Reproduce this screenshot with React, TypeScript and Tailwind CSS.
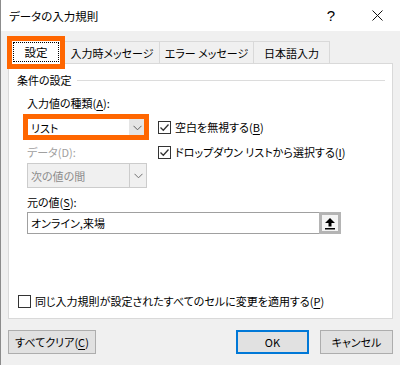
const font = "font-['Yu_Gothic_UI','Noto_Sans_CJK_JP',sans-serif] [font-feature-settings:'palt']"

function Check({ checked }: { checked: boolean }) {
  return (
    <span className="flex h-[13px] w-[13px] shrink-0 items-center justify-center border border-[#333] bg-white">
      {checked && (
        <svg width="11" height="11" viewBox="0 0 11 11">
          <path d="M1.5 5.5 L4.3 8.3 L9.5 2.5" fill="none" stroke="#333" strokeWidth="1.3" />
        </svg>
      )}
    </span>
  )
}

function Chevron({ color }: { color: string }) {
  return (
    <svg width="9" height="6" viewBox="0 0 9 6">
      <path d="M0.5 0.8 L4.5 4.8 L8.5 0.8" fill="none" stroke={color} strokeWidth="1" />
    </svg>
  )
}

function U({ c }: { c: string }) {
  return (
    <>
      (<span className="underline underline-offset-2">{c}</span>)
    </>
  )
}

export default function App() {
  return (
    <div
      className={`flex h-[365px] w-[400px] flex-col overflow-hidden border-l border-[#8c8c8c] bg-[#f0f0f0] text-[11px] leading-[16px] text-black ${font}`}
    >
      {/* タイトルバー */}
      <div className="flex h-[31px] shrink-0 items-center bg-white pl-[8px]">
        <span className="text-[11.5px]">データの入力規則</span>
        <div className="ml-auto flex h-full">
          <div className="flex w-[46px] items-center justify-center text-[15px] font-['Liberation_Sans',sans-serif]">?</div>
          <div className="flex w-[46px] items-center justify-center">
            <svg width="11" height="11" viewBox="0 0 11 11">
              <path d="M0.5 0.5 L10.5 10.5 M10.5 0.5 L0.5 10.5" stroke="#111" strokeWidth="1" />
            </svg>
          </div>
        </div>
      </div>

      <div className="flex flex-1 flex-col px-[7px]">
        {/* タブ */}
        <div className="relative z-10 mt-[7px] flex h-[25px] items-end pl-[2px]">
          <div className="relative mb-[-1px] flex h-[26px] w-[52px] items-center justify-center border border-b-0 border-[#d9d9d9] bg-white">
            <span className="flex h-[20px] w-[46px] items-center justify-center border border-dotted border-black text-[11.5px]">設定</span>
            <div className="absolute -left-[4px] -top-[3px] -right-[4px] -bottom-[5px] border-[5px] border-[#ff6600]" />
          </div>
          <div className="flex h-[22px] w-[98px] items-center justify-center border border-b-0 border-[#d9d9d9] pl-[2px]">入力時メッセージ</div>
          <div className="-ml-px flex h-[22px] w-[95px] items-center justify-center border border-b-0 border-[#d9d9d9]">エラー メッセージ</div>
          <div className="-ml-px flex h-[22px] w-[77px] items-center justify-center border border-b-0 border-[#d9d9d9]">日本語入力</div>
        </div>

        {/* パネル */}
        <div className="flex h-[256px] flex-col border border-[#d9d9d9] bg-white pl-[8px]">
          <div className="mt-[8px] flex items-center pr-[7px]">
            <span>条件の設定</span>
            <div className="ml-[5px] h-px flex-1 bg-[#dcdcdc]" />
          </div>

          <div className="flex flex-col pl-[10px]">
            <div className="mt-[7px]">
              入力値の種類<U c="A" />:
            </div>

            <div className="mt-[5px] flex items-start">
              <div className="flex w-[120px] flex-col">
                <div className="relative flex h-[24px] border border-[#7a7a7a] bg-white">
                  <span className="flex flex-1 items-center pl-[3px]">リスト</span>
                  <span className="flex w-[17px] items-center justify-center bg-[#e5e5e5]">
                    <Chevron color="#606060" />
                  </span>
                  <div className="absolute -left-[5px] -top-[3px] -right-[3px] -bottom-[1px] border-[5px] border-[#ff6600]" />
                </div>
                <div className="mt-[4px] text-[#a0a0a0]">データ(D):</div>
                <div className="mt-[3px] flex h-[25px] border border-[#cccccc] bg-[#f0f0f0] text-[#8c8c8c]">
                  <span className="flex flex-1 items-center pl-[3px]">次の値の間</span>
                  <span className="flex w-[17px] items-center justify-center border-l border-[#cccccc]">
                    <Chevron color="#707070" />
                  </span>
                </div>
              </div>

              <div className="ml-[11px] mt-[3px] flex flex-col gap-[9px]">
                <div className="flex items-center gap-[4px]">
                  <Check checked />
                  <span>
                    空白を無視する<U c="B" />
                  </span>
                </div>
                <div className="flex items-center gap-[4px]">
                  <Check checked />
                  <span>
                    ドロップダウン リストから選択する<U c="I" />
                  </span>
                </div>
              </div>
            </div>

            <div className="mt-[6px]">
              元の値<U c="S" />:
            </div>
            <div className="mt-[2px] flex h-[22px] w-[314px] border border-[#a0a0a0] bg-white">
              <span className="flex flex-1 items-center pl-[3px]">オンライン,来場</span>
              <span className="-my-px -mr-px flex w-[22px] items-center justify-center border-[3px] border-[#b4b4b4] bg-[#f4f4f4]">
                <svg width="12" height="13" viewBox="0 0 12 13">
                  <path d="M6 1 L11 6 L7.5 6 L7.5 9.5 L4.5 9.5 L4.5 6 L1 6 Z" fill="#000" />
                  <rect x="1" y="11" width="10" height="1.5" fill="#000" />
                </svg>
              </span>
            </div>
          </div>

          <div className="mt-auto mb-[9px] flex items-center gap-[4px] pl-[1px]">
            <Check checked={false} />
            <span>
              同じ入力規則が設定されたすべてのセルに変更を適用する<U c="P" />
            </span>
          </div>
        </div>

        {/* ボタン */}
        <div className="mt-[11px] flex">
          <button className="h-[24px] w-[88px] border border-[#adadad] bg-[#e1e1e1]">
            すべてクリア<U c="C" />
          </button>
          <button className="ml-auto h-[24px] w-[73px] border-2 border-[#0078d7] bg-[#e1e1e1]">OK</button>
          <button className="ml-[11px] h-[24px] w-[73px] border border-[#adadad] bg-[#e1e1e1]">キャンセル</button>
        </div>
      </div>
    </div>
  )
}
